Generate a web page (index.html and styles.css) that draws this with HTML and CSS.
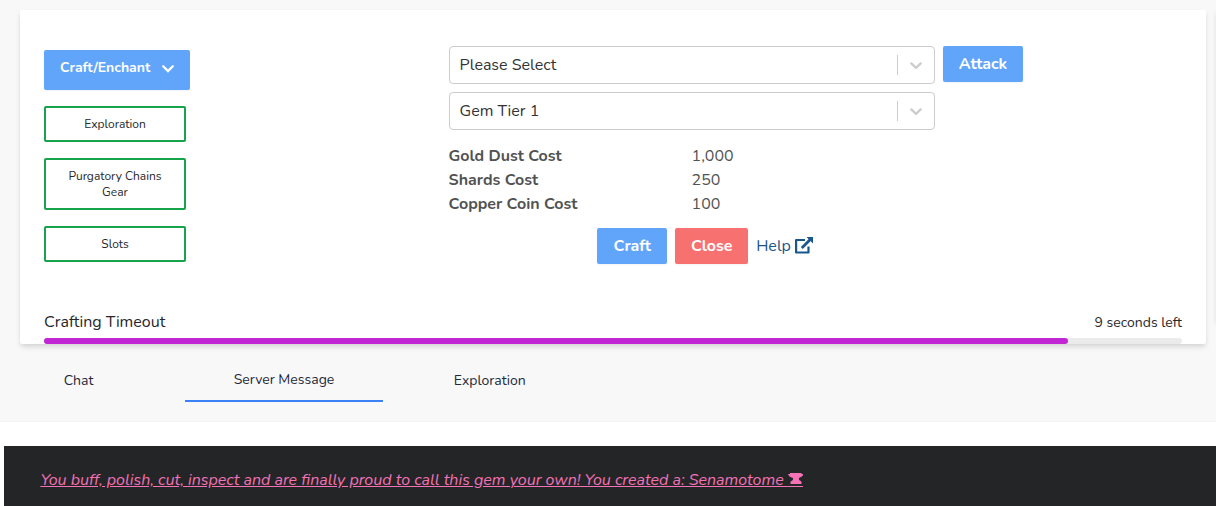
FILE: index.html
```html
<!DOCTYPE html>
<html lang="en">
<head>
<meta charset="utf-8">
<title>Crafting</title>
<link rel="stylesheet" href="styles.css">
</head>
<body>
<main class="game">
  <div class="columns">
    <section class="card">
      <div class="workspace">
        <nav class="actions">
          <button class="dropdown"><span>Craft/Enchant</span>
            <svg class="drop-icon" viewBox="0 0 20 20"><path fill="none" stroke="currentColor" stroke-width="2.300" stroke-linecap="round" stroke-linejoin="miter" d="M5.200 7.200 10 12l4.800-4.800"/></svg>
          </button>
          <button class="outline"><span>Exploration</span></button>
          <button class="outline"><span>Purgatory Chains<br>Gear</span></button>
          <button class="outline"><span>Slots</span></button>
        </nav>
        <div class="crafting">
          <div class="select"><span class="value">Please Select</span><i class="separator"></i>
            <svg class="arrow" viewBox="0 0 20 20"><path fill="currentColor" d="M4.516 7.548c0.436-0.446 1.043-0.481 1.576 0l3.908 3.747 3.908-3.747c0.533-0.481 1.141-0.446 1.574 0 0.436 0.445 0.408 1.197 0 1.615-0.406 0.418-4.695 4.502-4.695 4.502-0.217 0.223-0.502 0.335-0.787 0.335s-0.57-0.112-0.789-0.335c0 0-4.287-4.084-4.695-4.502s-0.436-1.17 0-1.615z"/></svg>
          </div>
          <div class="select"><span class="value">Gem Tier 1</span><i class="separator"></i>
            <svg class="arrow" viewBox="0 0 20 20"><path fill="currentColor" d="M4.516 7.548c0.436-0.446 1.043-0.481 1.576 0l3.908 3.747 3.908-3.747c0.533-0.481 1.141-0.446 1.574 0 0.436 0.445 0.408 1.197 0 1.615-0.406 0.418-4.695 4.502-4.695 4.502-0.217 0.223-0.502 0.335-0.787 0.335s-0.57-0.112-0.789-0.335c0 0-4.287-4.084-4.695-4.502s-0.436-1.17 0-1.615z"/></svg>
          </div>
          <dl class="costs">
            <dt>Gold Dust Cost</dt><dd>1,000</dd>
            <dt>Shards Cost</dt><dd>250</dd>
            <dt>Copper Coin Cost</dt><dd>100</dd>
          </dl>
          <div class="buttons">
            <button class="btn craft">Craft</button>
            <button class="btn close">Close</button>
            <a class="help"><span>Help</span>
              <svg class="link-icon" viewBox="0 0 18 17"><path fill="none" stroke="currentColor" stroke-width="2.200" stroke-linejoin="round" d="M10 3H1.100v12.500h12.400V9.500"/><path fill="none" stroke="currentColor" stroke-width="2.800" d="M6.800 11 15 2.800"/><path fill="currentColor" d="M11.500 0H18v6.500z"/></svg>
            </a>
          </div>
        </div>
        <button class="btn attack">Attack</button>
      </div>
      <div class="timer">
        <div class="timer-labels"><span>Crafting Timeout</span><span class="remaining">9 seconds left</span></div>
        <div class="track"><div class="bar" style="width: 90%"></div></div>
      </div>
    </section>
    <aside class="side-card"></aside>
  </div>
  <div class="tabs">
    <div class="tab"><span>Chat</span></div>
    <div class="tab active"><span>Server Message</span></div>
    <div class="tab"><span>Exploration</span></div>
  </div>
</main>
<section class="messages">
  <a class="message">You buff, polish, cut, inspect and are finally proud to call this gem your own! You created a: Senamotome&nbsp;<svg class="anvil" viewBox="0 0 15 11"><path fill="currentColor" d="M2 0h11.500v1H15v1.200C14 4 12 4.200 11 5v1.500c.2 1.200 2.300 1.300 2.500 2.500v2H2.500V9C2.700 7.800 4.800 7.700 5 6.500V5C3 4.500.500 3.500 0 1h2z"/></svg></a>
</section>
</body>
</html>
```
FILE: styles.css
```css
* { box-sizing: border-box; }
body { margin: 0; height: 506px; overflow: hidden; background: #fff; color: #27272a; font: 16px/24px Nunito, Lato, sans-serif; }
button { font: inherit; border: 0; padding: 0; }
span { white-space: nowrap; }
.game { height: 422px; background: #f8f8f8; border-bottom: 1px solid #f5f5f5; padding-top: 10px; overflow: hidden; }
.columns { display: flex; gap: 10px; padding-left: 20px; }
.card { flex: none; width: 1186px; height: 334px; padding: 36px 24px 0; background: #fff; border-radius: 2px; box-shadow: 0 4px 6px -1px rgba(0,0,0,.1), 0 2px 4px rgba(0,0,0,.06); }
.side-card { flex: none; width: 300px; height: 312px; background: #fff; border-radius: 2px; box-shadow: 0 2px 5px rgba(0,0,0,.1); }
.workspace { display: grid; grid-template-columns: 396.600px 486.400px 80px; column-gap: 8px; height: 264px; align-items: start; }
.actions { display: flex; flex-direction: column; align-items: flex-start; gap: 16px; padding-top: 4px; }
.dropdown { display: flex; justify-content: space-between; width: 146px; height: 40px; padding: 8px 12px 0 16px; background: #60a5fa; color: #fff; border-radius: 2px; font-weight: 700; font-size: 14px; line-height: 20px; box-shadow: 0 1px 2px rgba(0,0,0,.05); }
.drop-icon { width: 20px; height: 20px; margin-top: 1px; }
.outline { width: 142px; min-height: 36px; padding: 8px 16px; border: 2px solid #16a34a; border-radius: 2px; background: #fff; color: #27272a; font-size: 12px; line-height: 16px; }
.crafting { min-width: 0; }
.select { display: flex; align-items: center; height: 38px; margin-bottom: 8px; border: 1px solid #ccc; border-radius: 4px; color: #333; }
.value { flex: 1; padding-left: 10px; }
.separator { width: 1px; height: 20px; background: #ccc; }
.arrow { width: 20px; height: 20px; margin: 0 8px; color: #ccc; }
.costs { display: grid; grid-template-columns: 243px 1fr; margin: 14px 0 12px; color: #525252; }
dt { font-weight: 700; }
dd { margin: 0; }
.buttons { display: flex; justify-content: center; gap: 8px; padding-left: 27.800px; }
.btn { height: 36px; background: #60a5fa; color: #fff; border-radius: 2px; font-weight: 700; box-shadow: 0 1px 2px rgba(0,0,0,.05); }
.craft { width: 70px; }
.close { width: 73px; background: #f87171; }
.help { display: flex; align-items: center; gap: 4px; width: 58px; height: 36px; color: #18568c; }
.link-icon { width: 18px; height: 17px; flex: none; margin-top: -2px; }
.attack { width: 80px; }
.timer-labels { display: flex; justify-content: space-between; height: 28px; }
.remaining { font-size: 14px; padding-top: 1px; }
.track { height: 6px; border-radius: 6px; background: #ebebeb; }
.bar { height: 6px; border-radius: 6px; background: #c026d3; }
.tabs { display: flex; padding: 13px 0 0 4px; font-size: 14px; line-height: 20px; color: #1e293b; }
.tab { width: 198px; height: 45px; padding-top: 14px; padding-left: 59.700px; }
.tab:first-child { width: 181px; }
.tab.active { padding-left: 48.700px; padding-top: 13px; border-bottom: 2px solid #3b82f6; }
.tab:last-child { padding-left: 70.800px; }
.messages { height: 60px; margin: 24px 0 0 4px; padding: 22px 36px 0 36.400px; background: #242527; }
.message { color: #f472b6; font-style: italic; text-decoration: underline; white-space: nowrap; }
/* The icon carries its own rule so the link underline continues beneath it. */
.anvil { width: 15px; height: 14px; padding-bottom: 2px; border-bottom: 1px solid currentColor; vertical-align: -2px; }
```
